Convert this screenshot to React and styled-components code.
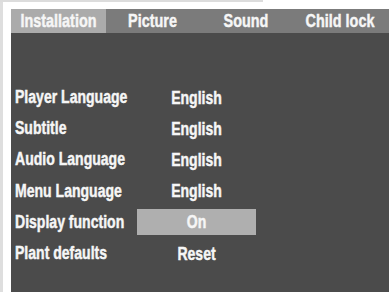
import React from "react";
import styled, { createGlobalStyle } from "styled-components";

const Global = createGlobalStyle`
  html, body { margin: 0; padding: 0; background: #ffffff; }
  body { width: 392px; height: 298px; overflow: hidden; }
`;

const Page = styled.div`
  position: relative;
  width: 392px;
  height: 298px;
  box-sizing: border-box;
  padding: 9px 3px 0 11px;
  &::before {
    content: "";
    position: absolute;
    left: 0;
    top: 0;
    width: 3px;
    height: 292px;
    background: #dedede;
  }
  &::after {
    content: "";
    position: absolute;
    left: 0;
    top: 0;
    width: 263px;
    height: 2px;
    background: #dcdcdc;
  }
`;

const Screen = styled.div`
  width: 378px;
  height: 283px;
  background: #4b4b4b;
  display: flex;
  flex-direction: column;
  font-family: "Liberation Sans", Arial, sans-serif;
  font-weight: 700;
  font-size: 18px;
  color: #f6f6f6;
  -webkit-text-stroke: 0.45px #f6f6f6;
`;

/* condensed face: Helvetica Condensed look via horizontal squeeze */
const Narrow = styled.span`
  display: inline-block;
  white-space: nowrap;
  line-height: 1;
  transform: scaleX(${(p) => p.$sx || 0.78});
  transform-origin: ${(p) => (p.$left ? "left center" : "center center")};
`;

const TabBar = styled.div`
  display: flex;
  height: 24px;
  background: #7b7b7b;
`;

const Tab = styled.div`
  width: ${(p) => p.$w}px;
  display: flex;
  align-items: center;
  justify-content: center;
  background: ${(p) => (p.$active ? "#ababab" : "transparent")};
  white-space: nowrap;
`;

const List = styled.div`
  display: flex;
  flex-direction: column;
  padding: 49px 0 0 4px;
`;

const Row = styled.div`
  display: flex;
  align-items: center;
  height: 31.2px;
`;

const Label = styled.div`
  width: 122px;
  white-space: nowrap;
`;

const Value = styled.div`
  width: 119px;
  height: 26px;
  display: flex;
  align-items: center;
  justify-content: center;
  background: ${(p) => (p.$selected ? "#afafaf" : "transparent")};
`;

const tabs = [
  { name: "Installation", w: 95, active: true },
  { name: "Picture", w: 94 },
  { name: "Sound", w: 91 },
  { name: "Child lock", w: 98 },
];

const rows = [
  ["Player Language", "English"],
  ["Subtitle", "English"],
  ["Audio Language", "English"],
  ["Menu Language", "English"],
  ["Display function", "On", true],
  ["Plant defaults", "Reset"],
];

export default function App() {
  return (
    <>
      <Global />
      <Page>
        <Screen>
          <TabBar>
            {tabs.map((t) => (
              <Tab key={t.name} $w={t.w} $active={t.active}>
                <Narrow $sx={0.8}>{t.name}</Narrow>
              </Tab>
            ))}
          </TabBar>
          <List>
            {rows.map(([l, v, sel]) => (
              <Row key={l}>
                <Label>
                  <Narrow $left>{l}</Narrow>
                </Label>
                <Value $selected={sel}>
                  <Narrow>{v}</Narrow>
                </Value>
              </Row>
            ))}
          </List>
        </Screen>
      </Page>
    </>
  );
}
